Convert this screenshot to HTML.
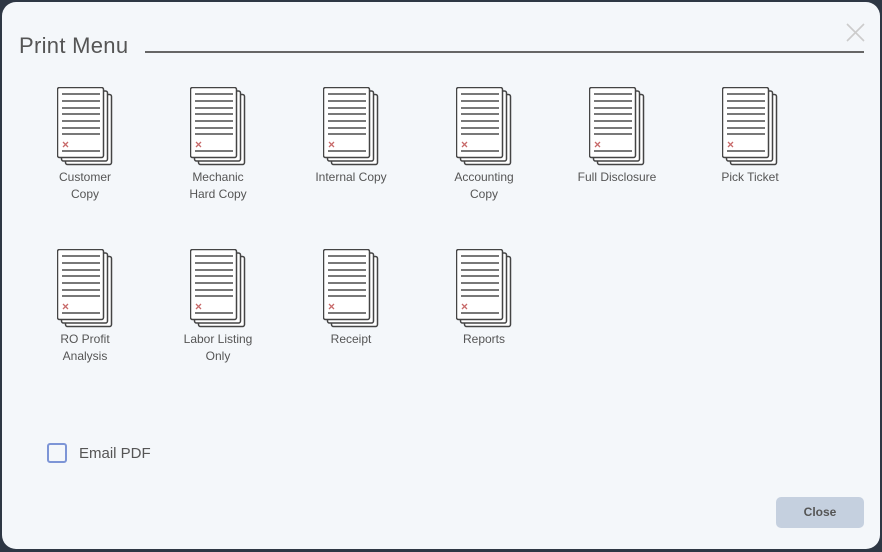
<!DOCTYPE html>
<html><head><style>
body{margin:0;width:882px;height:552px;background:#2e3744;font-family:"Liberation Sans",sans-serif;overflow:hidden;position:relative}
.dlg{position:absolute;left:2px;top:2px;width:878px;height:547px;background:#f4f7fa;border-radius:14px}
.title{position:absolute;left:19px;top:33px;font-size:22px;color:#555;letter-spacing:0.3px}
.rule{position:absolute;left:145px;top:51px;width:719px;height:2px;background:#666}
.item{position:absolute;width:120px;text-align:center;font-size:12px;line-height:17px;color:#555}
.item svg{display:block;margin:0 auto 3px auto}
.cb{position:absolute;left:47px;top:443px;width:16px;height:16px;border:2px solid #7d95d6;border-radius:3px}
.lbl{position:absolute;left:79px;top:445px;font-size:15px;color:#555}
.btn{position:absolute;left:776px;top:497px;width:88px;height:31px;background:#c5d0df;border-radius:5px;font-size:12px;font-weight:bold;color:#555;text-align:center;line-height:31px}
</style></head><body>
<div class="dlg"></div>
<div class="title">Print Menu</div>
<div class="rule"></div>
<svg style="position:absolute;left:846px;top:23px" width="19" height="19"><path d="M1 1L18 18M18 1L1 18" stroke="#ccc" stroke-width="1.6"/></svg>
<svg width="0" height="0" style="position:absolute"><defs>
<g id="doc">
<rect x="8.5" y="7.5" width="46" height="70" rx="2" fill="#fff" stroke="#444" stroke-width="1.5"/>
<rect x="4.5" y="4" width="46" height="70" rx="2" fill="#fff" stroke="#444" stroke-width="1.5"/>
<rect x="0.5" y="0.5" width="46" height="70" rx="2" fill="#fff" stroke="#444" stroke-width="1.5"/>
<g stroke="#666" stroke-width="1.8">
<path d="M5 7H43M5 14H43M5 21H43M5 27H43M5 34H43M5 41H43M5 47H43M5 64H43"/>
</g>
<path d="M6 55L11 60M11 55L6 60" stroke="#c86a6a" stroke-width="1.3"/>
</g></defs></svg>
<div class="item" style="left:25px;top:87px"><svg width="56" height="79"><use href="#doc"/></svg>Customer<br>Copy</div>
<div class="item" style="left:158px;top:87px"><svg width="56" height="79"><use href="#doc"/></svg>Mechanic<br>Hard Copy</div>
<div class="item" style="left:291px;top:87px"><svg width="56" height="79"><use href="#doc"/></svg>Internal Copy</div>
<div class="item" style="left:424px;top:87px"><svg width="56" height="79"><use href="#doc"/></svg>Accounting<br>Copy</div>
<div class="item" style="left:557px;top:87px"><svg width="56" height="79"><use href="#doc"/></svg>Full Disclosure</div>
<div class="item" style="left:690px;top:87px"><svg width="56" height="79"><use href="#doc"/></svg>Pick Ticket</div>
<div class="item" style="left:25px;top:249px"><svg width="56" height="79"><use href="#doc"/></svg>RO Profit<br>Analysis</div>
<div class="item" style="left:158px;top:249px"><svg width="56" height="79"><use href="#doc"/></svg>Labor Listing<br>Only</div>
<div class="item" style="left:291px;top:249px"><svg width="56" height="79"><use href="#doc"/></svg>Receipt</div>
<div class="item" style="left:424px;top:249px"><svg width="56" height="79"><use href="#doc"/></svg>Reports</div>
<div class="cb"></div>
<div class="lbl">Email PDF</div>
<div class="btn">Close</div>
</body></html>
